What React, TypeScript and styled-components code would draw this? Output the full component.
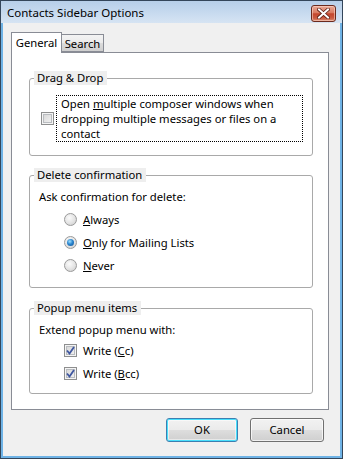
import styled, { createGlobalStyle } from 'styled-components';

const GlobalStyle = createGlobalStyle`
  html, body {
    margin: 0;
    padding: 0;
    background: #ffffff;
  }
  body {
    font-family: 'Noto Sans', 'Open Sans', sans-serif;
    font-size: 11.25px;
    color: #000000;
  }
`;

const Window = styled.div`
  width: 343px;
  height: 459px;
  box-sizing: border-box;
  border: 1px solid #34465a;
  background: #6fb3e6;
  display: flex;
  flex-direction: column;
`;

const TitleBar = styled.div`
  height: 22px;
  flex-shrink: 0;
  display: flex;
  align-items: center;
  justify-content: space-between;
  padding: 0 6px;
  background: linear-gradient(180deg, #b7cfe9 0%, #c4d8ee 45%, #d6e4f3 100%);
`;

const Title = styled.div`
  font-size: 11.5px;
  line-height: 16px;
  padding-top: 2px;
  color: #000000;
`;

const CloseButton = styled.div`
  width: 25px;
  height: 17px;
  box-sizing: border-box;
  margin-top: 2px;
  border: 1px solid #6b2a1d;
  border-radius: 3px;
  background: linear-gradient(180deg, #eaa996 0%, #d97c63 45%, #c4462d 52%, #c95a41 80%, #dc8d72 100%);
  box-shadow: inset 0 0 0 1px rgba(255, 220, 205, 0.55);
  display: flex;
  align-items: center;
  justify-content: center;
`;

const Body = styled.div`
  flex: 1;
  margin: 0 2px 2px 2px;
  background: #f0f0f0;
  padding: 9px 11px 0 8px;
  display: flex;
  flex-direction: column;
`;

const TabRow = styled.div`
  display: flex;
  align-items: flex-end;
  height: 20px;
  position: relative;
  z-index: 1;
`;

const Tab = styled.div<{ $active?: boolean }>`
  box-sizing: border-box;
  border: 1px solid #898c95;
  border-bottom: ${(p) => (p.$active ? 'none' : '1px solid #898c95')};
  border-left: ${(p) => (p.$active ? '1px solid #898c95' : 'none')};
  height: ${(p) => (p.$active ? '21px' : '18px')};
  margin-bottom: ${(p) => (p.$active ? '-1px' : '0')};
  padding: ${(p) => (p.$active ? '2px 0 0 0' : '1px 0 0 0')};
  width: ${(p) => (p.$active ? '51px' : '42px')};
  text-align: center;
  background: ${(p) =>
    p.$active ? '#ffffff' : 'linear-gradient(180deg, #f3f3f3 0%, #ebebeb 50%, #dcdcdc 51%, #cfcfcf 100%)'};
  line-height: 16px;
  white-space: nowrap;
`;

const Panel = styled.div`
  width: 318px;
  box-sizing: border-box;
  border: 1px solid #898c95;
  background: #ffffff;
  padding: 18px 0 15px 17px;
  display: flex;
  flex-direction: column;
`;

const Group = styled.fieldset<{ $gap?: number }>`
  width: 284px;
  box-sizing: border-box;
  margin: ${(p) => p.$gap ?? 0}px 0 0 0;
  padding: 0;
  border: 1px solid #a9a9a9;
  border-radius: 3px;
  min-inline-size: 0;
`;

const Legend = styled.legend`
  margin-left: 4px;
  padding: 0 4px 0 3px;
  background: #eeeeee;
  line-height: 14px;
  height: 14px;
`;

const GroupBody = styled.div<{ $top: number; $bottom: number; $left: number }>`
  padding: ${(p) => p.$top}px 9px ${(p) => p.$bottom}px ${(p) => p.$left}px;
  display: flex;
  flex-direction: column;
`;

const Line = styled.div`
  line-height: 15px;
  white-space: nowrap;
`;

const CheckRow = styled.div`
  display: flex;
  align-items: center;
`;

const FocusText = styled.div`
  margin-left: 2px;
  border: 1px dotted #000000;
  padding: 0 4px;
  width: 247px;
  box-sizing: border-box;
  line-height: 15px;
  white-space: nowrap;
`;

const OptionList = styled.div<{ $top: number }>`
  margin-top: ${(p) => p.$top}px;
  padding-left: 25px;
  display: flex;
  flex-direction: column;
`;

const OptionRow = styled.div`
  height: 23px;
  display: flex;
  align-items: center;
  gap: 6px;
  white-space: nowrap;
`;

const Box = styled.span`
  width: 13px;
  height: 13px;
  box-sizing: border-box;
  flex-shrink: 0;
  border: 1px solid #8e8f8f;
  background: linear-gradient(135deg, #d3d3d3 0%, #f6f6f6 100%);
  box-shadow: inset 0 0 0 1px #f4f4f4, inset 0 0 0 2px #b9bcc0;
  display: inline-flex;
  align-items: center;
  justify-content: center;
`;

const Radio = styled.span<{ $checked?: boolean }>`
  width: 13px;
  height: 13px;
  box-sizing: border-box;
  flex-shrink: 0;
  border-radius: 50%;
  border: 1px solid #9a9a9a;
  background: radial-gradient(circle at 40% 35%, #fbfbfb 0%, #e3e3e3 55%, #c8c8c8 100%);
  display: inline-flex;
  align-items: center;
  justify-content: center;
  &::after {
    content: '';
    display: ${(p) => (p.$checked ? 'block' : 'none')};
    width: 7px;
    height: 7px;
    border-radius: 50%;
    background: radial-gradient(circle at 40% 35%, #9fe0ff 0%, #2b86cf 45%, #0d4f93 100%);
  }
`;

const Footer = styled.div`
  display: flex;
  justify-content: flex-end;
  gap: 12px;
  padding: 8px 5px 0 0;
`;

const Button = styled.div<{ $default?: boolean; $w: number }>`
  width: ${(p) => p.$w}px;
  height: 24px;
  box-sizing: border-box;
  border: 1px solid ${(p) => (p.$default ? '#3c7fb1' : '#707070')};
  border-radius: 3px;
  background: linear-gradient(180deg, #f2f2f2 0%, #ebebeb 48%, #dddddd 52%, #cfcfcf 100%);
  box-shadow: ${(p) =>
    p.$default
      ? 'inset 0 0 0 1px #48dffc, inset 0 0 0 2px rgba(255,255,255,0.5)'
      : 'inset 0 0 0 1px rgba(255,255,255,0.7)'};
  display: flex;
  align-items: center;
  justify-content: center;
  line-height: 16px;
`;

const Check = () => (
  <svg width="9" height="9" viewBox="0 0 9 9">
    <path d="M1 4.5 L3.5 7.5 L8 1" fill="none" stroke="#3f57a0" strokeWidth="1.8" />
  </svg>
);

const CloseGlyph = () => (
  <svg width="13" height="11" viewBox="0 0 13 11">
    <path d="M2 1.5 L11 9.5 M11 1.5 L2 9.5" stroke="#5a1d12" strokeWidth="3.6" strokeLinecap="square" />
    <path d="M2 1.5 L11 9.5 M11 1.5 L2 9.5" stroke="#ffffff" strokeWidth="2" strokeLinecap="square" />
  </svg>
);

const App = () => {
  return (
    <>
      <GlobalStyle />
      <Window>
        <TitleBar>
          <Title>Contacts Sidebar Options</Title>
          <CloseButton>
            <CloseGlyph />
          </CloseButton>
        </TitleBar>
        <Body>
          <TabRow>
            <Tab $active>General</Tab>
            <Tab>Search</Tab>
          </TabRow>
          <Panel>
            <Group>
              <Legend>Drag &amp; Drop</Legend>
              <GroupBody $top={10} $bottom={13} $left={11}>
                <CheckRow>
                  <Box />
                  <FocusText>
                    Open <u>m</u>ultiple composer windows when
                    <br />
                    dropping multiple messages or files on a
                    <br />
                    contact
                  </FocusText>
                </CheckRow>
              </GroupBody>
            </Group>

            <Group $gap={12}>
              <Legend>Delete confirmation</Legend>
              <GroupBody $top={7} $bottom={10} $left={9}>
                <Line>Ask confirmation for delete:</Line>
                <OptionList $top={4}>
                  <OptionRow>
                    <Radio />
                    <span>
                      <u>A</u>lways
                    </span>
                  </OptionRow>
                  <OptionRow>
                    <Radio $checked />
                    <span>
                      <u>O</u>nly for Mailing Lists
                    </span>
                  </OptionRow>
                  <OptionRow>
                    <Radio />
                    <span>
                      <u>N</u>ever
                    </span>
                  </OptionRow>
                </OptionList>
              </GroupBody>
            </Group>

            <Group $gap={13}>
              <Legend>Popup menu items</Legend>
              <GroupBody $top={7} $bottom={8} $left={9}>
                <Line>Extend popup menu with:</Line>
                <OptionList $top={2}>
                  <OptionRow>
                    <Box>
                      <Check />
                    </Box>
                    <span>
                      Write (<u>C</u>c)
                    </span>
                  </OptionRow>
                  <OptionRow>
                    <Box>
                      <Check />
                    </Box>
                    <span>
                      Write (<u>B</u>cc)
                    </span>
                  </OptionRow>
                </OptionList>
              </GroupBody>
            </Group>
          </Panel>
          <Footer>
            <Button $default $w={72}>
              OK
            </Button>
            <Button $w={74}>Cancel</Button>
          </Footer>
        </Body>
      </Window>
    </>
  );
};

export default App;
